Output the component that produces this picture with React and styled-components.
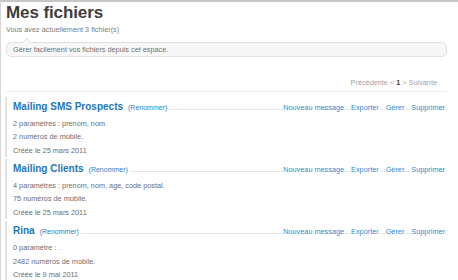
import styled, { createGlobalStyle } from 'styled-components'

const files = [
  {
    name: 'Mailing SMS Prospects',
    params: '2 paramètres : prenom, nom.',
    count: '2 numéros de mobile.',
    created: 'Créée le 25 mars 2011',
  },
  {
    name: 'Mailing Clients',
    params: '4 paramètres : prenom, nom, age, code postal.',
    count: '75 numéros de mobile.',
    created: 'Créée le 25 mars 2011',
  },
  {
    name: 'Rina',
    params: '0 paramètre : .',
    count: '2482 numéros de mobile.',
    created: 'Créée le 9 mai 2011',
  },
]

const actions = ['Nouveau message', 'Exporter', 'Gérer', 'Supprimer']

const GlobalStyle = createGlobalStyle`
body{
    margin: 0;
    background: #fff;
    font-family: "Liberation Sans", Arial, sans-serif;
}
`

const Page = styled.div`
box-sizing: border-box;
height: 100vh;
overflow: hidden;
border-top: 2px solid #c6c6c6;
border-left: 1px solid #d6d6d6;
padding: 1px 11px 0 4px;
`

const Title = styled.h1`
margin: 0 0 0 1px;
font-size: 17px;
line-height: 20px;
font-weight: bold;
color: #3d3d3d;
letter-spacing: -0.1px;
`

const Subtitle = styled.p`
margin: 2px 0 0 1px;
font-size: 7.3px;
line-height: 10px;
color: #7b7b7b;
`

const InfoBox = styled.div`
position: relative;
margin: 7px 0 0 1px;
padding: 2px 6px 1px;
font-size: 7.3px;
line-height: 10px;
color: #737373;
background: #f7f7f7;
border: 1px solid #dedede;
border-radius: 6px;

&::before, &::after{
    content: '';
    position: absolute;
    left: 16px;
    width: 0;
    height: 0;
    border-left: 4px solid transparent;
    border-right: 4px solid transparent;
}
&::before{
    top: -5px;
    border-bottom: 4px solid #dedede;
}
&::after{
    top: -4px;
    border-bottom: 4px solid #f7f7f7;
}
`

const Pager = styled.div`
margin-top: 21px;
padding: 0 10px 3px 0;
text-align: right;
font-size: 7.3px;
line-height: 10px;
color: #a3a3a3;
border-bottom: 1px solid #ececec;

b{
    color: #3a3a3a;
}
`

const FileList = styled.div`
display: flex;
flex-direction: column;
gap: 2px;
margin-top: 5px;
`

const FileBlock = styled.div`
border-left: 2px solid #e2e2e2;
padding: 3px 0 0 6px;
`

const FileHeader = styled.div`
display: flex;
align-items: baseline;
padding-right: 2px;
background: linear-gradient(transparent 9px, #e6e6e6 9px, #e6e6e6 10px, transparent 10px);
`

const FileName = styled.h2`
margin: 0;
font-size: 10px;
line-height: 13px;
font-weight: bold;
color: #1e76b4;
background: #fff;
`

const Rename = styled.a`
padding: 0 2px 0 5px;
font-size: 7px;
color: #2b84c3;
background: #fff;
text-decoration: none;
`

const Spacer = styled.span`
flex: 1;
`

const Action = styled.a`
margin-left: ${({first}) => (first ? '0' : '7px')};
font-size: 7.3px;
color: #2d8cca;
background: #fff;
text-decoration: none;
`

const InfoLine = styled.p`
margin: 0;
font-size: 7.3px;
line-height: 13.5px;
color: #6e6e6e;
&:first-of-type{
    margin-top: 3.7px;
}
`

const App = () => {
    return (
        <Page>
            <GlobalStyle/>
            <Title>Mes fichiers</Title>
            <Subtitle>Vous avez actuellement 3 fichier(s)</Subtitle>
            <InfoBox>Gérer facilement vos fichiers depuis cet espace.</InfoBox>
            <Pager>Précédente &lt; <b>1</b> &gt; Suivante</Pager>
            <FileList>
                {files.map((file, index) => (
                    <FileBlock key={index}>
                        <FileHeader>
                            <FileName>{file.name}</FileName>
                            <Rename>(Renommer)</Rename>
                            <Spacer/>
                            {actions.map((action, i) => (
                                <Action first={i === 0} key={i}>{action}</Action>
                            ))}
                        </FileHeader>
                        <InfoLine>{file.params}</InfoLine>
                        <InfoLine>{file.count}</InfoLine>
                        <InfoLine>{file.created}</InfoLine>
                    </FileBlock>
                ))}
            </FileList>
        </Page>
    )
}

export default App;
